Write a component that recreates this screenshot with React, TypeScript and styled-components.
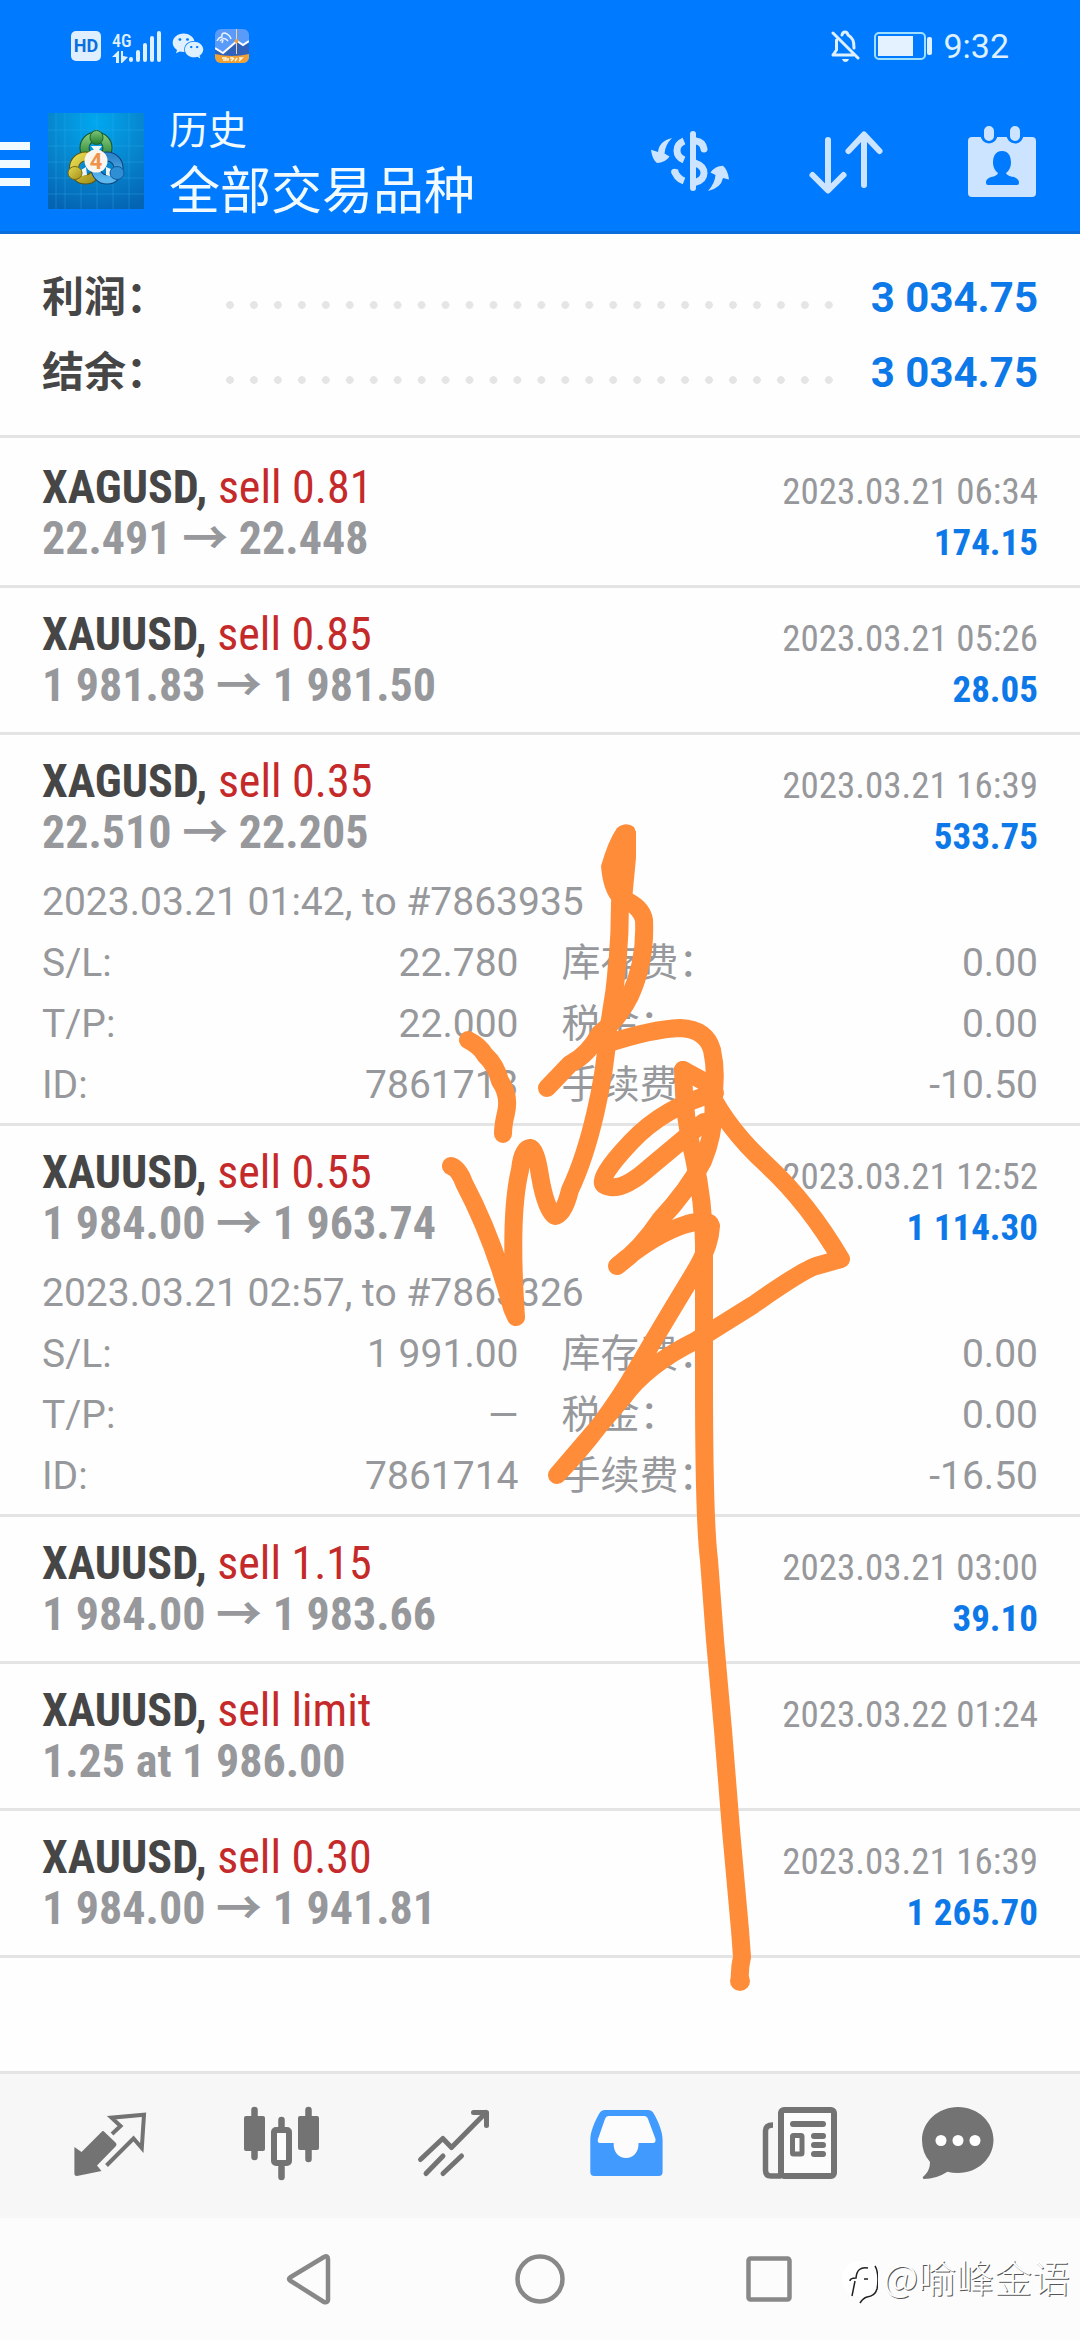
import React from "react";
import styled, { createGlobalStyle } from "styled-components";
import { FaWeixin } from "react-icons/fa";

const SANS = `Roboto, "Noto Sans CJK SC", sans-serif`;
const CONDENSED = `"Roboto Condensed", Roboto, "Noto Sans CJK SC", sans-serif`;

const GlobalStyle = createGlobalStyle`
  * { box-sizing: border-box; }
  body { margin: 0; background: #fefefe; font-family: ${SANS}; }
  button { margin: 0; padding: 0; border: 0; background: none; font: inherit; color: inherit; cursor: pointer; }
  ul, dl, dd, h1, p { margin: 0; padding: 0; }
  ul { list-style: none; }
  svg { display: block; }
`;

const Page = styled.div`
  position: relative;
  display: flex;
  flex-direction: column;
  min-height: 100vh;
  overflow: hidden;
`;

/* ---------- header ---------- */

const Header = styled.header`
  background: #007bff;
  border-bottom: 3px solid #0b6cdb;
  color: #f0faff;
`;

const StatusBar = styled.div`
  display: flex;
  align-items: center;
  justify-content: space-between;
  height: 90px;
  padding: 2px 71px 0 71px;
  color: #dff0ff;
`;

const StatusGroup = styled.div`
  display: flex;
  align-items: center;
  gap: 11px;
`;

const HdBadge = styled.span`
  width: 30px;
  height: 30px;
  border-radius: 5px;
  background: #e0efff;
  color: #0a6fe0;
  font-size: 18px;
  font-weight: 700;
  line-height: 30px;
  text-align: center;
`;

const Signal = styled.div`
  display: grid;
  grid-template-columns: 17px 32px;
  align-items: end;
  height: 33px;
`;

const Network = styled.div`
  font-family: ${CONDENSED};
  font-size: 18px;
  font-weight: 500;
  line-height: 20px;
`;

const Clock = styled.time`
  font-size: 34px;
  line-height: 42px;
`;

const AppBar = styled.div`
  display: flex;
  align-items: center;
  height: 141px;
  padding-right: 30px;
`;

const MenuButton = styled.button`
  display: flex;
  flex-direction: column;
  gap: 10px;
  width: 30px;
  margin-right: 18px;
  padding-top: 6px;
`;

const MenuLine = styled.span`
  height: 8px;
  background: #f0faff;
`;

const Titles = styled.div`
  flex: 1;
  padding: 6px 0 0 25px;
`;

const Screen = styled.p`
  font-size: 39px;
  line-height: 56px;
`;

const Scope = styled.h1`
  font-size: 51px;
  font-weight: 400;
  line-height: 66px;
`;

const Actions = styled.div`
  display: flex;
  gap: 60px;
  color: #cce4ff;
`;

/* ---------- summary ---------- */

const Main = styled.main`
  flex: 1;
`;

const Summary = styled.dl`
  padding: 26px 42px 25px;
  border-bottom: 3px solid #e4e4e4;
`;

const SummaryRow = styled.div`
  display: grid;
  grid-template-columns: 176px 1fr auto;
  align-items: center;
  font-size: 42px;
  font-weight: 700;
  line-height: 75px;
`;

const SummaryLabel = styled.dt`
  color: #464646;
`;

const Leader = styled.span`
  height: 8px;
  margin: 15px 30px 0 0;
  background: radial-gradient(circle closest-side, #e5e5e5 90%, transparent) 0 0 / 24px 8px round;
`;

const SummaryValue = styled.dd`
  color: #0d78e8;
`;

/* ---------- deals ---------- */

const Deals = styled.ul`
  padding-top: 3px;
  color: #97989b;
`;

const DealItem = styled.li<{ $expanded: boolean }>`
  padding: 21px 42px ${(p) => (p.$expanded ? 7 : 17)}px;
  border-bottom: 3px solid #e4e4e4;
`;

const DealHead = styled.div`
  display: flex;
  justify-content: space-between;
  min-height: 106px;
  font-family: ${CONDENSED};
  line-height: 51px;
`;

const DealMain = styled.div`
  font-size: 46px;
  font-weight: 700;
`;

const Symbol = styled.span`
  color: #464646;
`;

const Side = styled.span`
  color: #c52a2a;
  font-weight: 400;
`;

const DealSide = styled.div`
  padding-top: 4px;
  font-size: 37px;
  text-align: right;
`;

const Profit = styled.p`
  color: #0d78e8;
  font-weight: 700;
`;

const Details = styled.div`
  margin-top: 10px;
  font-size: 39px;
  line-height: 61px;
`;

const DetailGrid = styled.dl`
  display: grid;
  grid-template-columns: 1fr 1fr;
  column-gap: 43px;
`;

const DetailPair = styled.div`
  display: flex;
  justify-content: space-between;
`;

/* ---------- bottom bars ---------- */

const TabBar = styled.nav`
  display: grid;
  grid-template-columns: repeat(6, 1fr);
  justify-items: center;
  align-items: center;
  height: 147px;
  padding: 0 24px;
  border-top: 3px solid #e4e4e4;
  background: #f7f7f7;
`;

const Tab = styled.button<{ $active?: boolean }>`
  color: ${(p) => (p.$active ? "#419bff" : "#737373")};
`;

const SystemNav = styled.nav`
  position: relative;
  display: flex;
  align-items: center;
  justify-content: center;
  gap: 170px;
  height: 122px;
  background: #fcfcfc;
  color: #888;
`;

const Watermark = styled.div`
  position: absolute;
  right: 10px;
  top: 36px;
  display: flex;
  align-items: flex-start;
  gap: 5px;
  color: #fff;
  font-family: "Noto Sans CJK SC", sans-serif;
  font-size: 38px;
  font-weight: 300;
  line-height: 44px;
  text-shadow: 1px 1px 0 #555;
`;

const Handwriting = styled.svg`
  position: absolute;
  left: 430px;
  top: 810px;
  pointer-events: none;
`;

/* ---------- data ---------- */

type Deal = {
  symbol: string;
  side: string;
  price: string;
  time: string;
  profit?: string;
  info?: string;
  rows?: [string, string][];
};

const deals: Deal[] = [
  { symbol: "XAGUSD,", side: "sell 0.81", price: "22.491 → 22.448", time: "2023.03.21 06:34", profit: "174.15" },
  { symbol: "XAUUSD,", side: "sell 0.85", price: "1 981.83 → 1 981.50", time: "2023.03.21 05:26", profit: "28.05" },
  {
    symbol: "XAGUSD,", side: "sell 0.35", price: "22.510 → 22.205", time: "2023.03.21 16:39", profit: "533.75",
    info: "2023.03.21 01:42, to #7863935",
    rows: [["S/L:", "22.780"], ["库存费：", "0.00"], ["T/P:", "22.000"], ["税金：", "0.00"], ["ID:", "7861713"], ["手续费：", "-10.50"]],
  },
  {
    symbol: "XAUUSD,", side: "sell 0.55", price: "1 984.00 → 1 963.74", time: "2023.03.21 12:52", profit: "1 114.30",
    info: "2023.03.21 02:57, to #7863326",
    rows: [["S/L:", "1 991.00"], ["库存费：", "0.00"], ["T/P:", "—"], ["税金：", "0.00"], ["ID:", "7861714"], ["手续费：", "-16.50"]],
  },
  { symbol: "XAUUSD,", side: "sell 1.15", price: "1 984.00 → 1 983.66", time: "2023.03.21 03:00", profit: "39.10" },
  { symbol: "XAUUSD,", side: "sell limit", price: "1.25 at 1 986.00", time: "2023.03.22 01:24" },
  { symbol: "XAUUSD,", side: "sell 0.30", price: "1 984.00 → 1 941.81", time: "2023.03.21 16:39", profit: "1 265.70" },
];

/* ---------- icons ---------- */

const Icon = ({ children }: { children: React.ReactNode }) => (
  <svg width="96" height="96" viewBox="0 0 96 96" fill="none" aria-hidden="true">{children}</svg>
);

const line = { stroke: "currentColor", strokeLinecap: "round", strokeLinejoin: "round" } as const;

const CurrencyIcon = () => (
  <Icon>
    <path {...line} strokeWidth="6" d="M51 21V75" />
    <g stroke="currentColor" strokeWidth="7">
      <path d="M42 28Q35 31 35 37.5Q35 44 42 47" />
      <path strokeLinecap="round" d="M54 28Q61 29 62 36" />
      <path d="M53 50Q62 53 62 60Q62 67 53 69.5" />
    </g>
    <path stroke="currentColor" strokeWidth="7" d="M42 68Q34 65 32.5 57" />
    <circle cx="32.5" cy="59" r="3.2" fill="currentColor" />
    <path fill="currentColor" d="M30 25Q17 28 16 39L9 36.7Q10 46 15 50Q23 50 27.5 43.5L22.5 40.5Q23 32 30 25ZM66 78Q79 75 81 65L87 66.5Q86 57 81 52.7Q73 53 68.5 59.5L73.5 62Q73 70 66 78Z" />
  </Icon>
);

const SortIcon = () => (
  <Icon>
    <path {...line} strokeWidth="6" d="M30 27V77M14.5 62L30 77.5L45.5 62M66 72V22M50.5 38L66 21.5L81.5 38" />
  </Icon>
);

const CalendarIcon = () => (
  <Icon>
    <rect x="14" y="24" width="68" height="60" rx="4" fill="currentColor" />
    <path stroke="#007bff" strokeWidth="17" strokeLinecap="round" d="M35 16V22M61 16V22" />
    <path stroke="currentColor" strokeWidth="10" strokeLinecap="round" d="M35 18V23M61 18V23" />
    <path fill="#007bff" d="M48 38C41 38 39 44 39 50C39 54 41 58 44 60Q43 63 37 64Q32 66 32 69V70Q32 72 34 72H63Q65 72 65 70V69Q65 66 60 64Q53 63 52 60C55 58 57 54 57 50C57 44 55 38 48 38Z" />
  </Icon>
);

const QuotesIcon = () => (
  <Icon>
    <path fill="currentColor" d="M39.5 34Q41 32 42.5 34L54 45Q55 46.5 54 48L35 67.5L39.5 73L15 78Q12.4 78 12.4 75.5V49L19.5 54Z" />
    <path stroke="currentColor" strokeWidth="4" strokeLinejoin="miter" d="M50 36L58.5 28L49.5 19.7L82 16.7L79.8 50L71.5 40.5L44.5 67.5" />
  </Icon>
);

const ChartIcon = () => (
  <Icon>
    <path {...line} strokeWidth="6.5" d="M20.5 12V59M74.5 12V61M47.5 22V30M47.5 69V79" />
    <rect x="10" y="18" width="21" height="35" rx="2" fill="currentColor" />
    <rect x="64" y="18" width="21" height="34" rx="2" fill="currentColor" />
    <rect x="40" y="32" width="15" height="33" rx="2" stroke="currentColor" strokeWidth="6" />
    <rect x="43" y="35" width="9" height="27" rx="3" fill="#fcfcfc" />
  </Icon>
);

const TradeIcon = () => (
  <Icon>
    <path {...line} strokeWidth="5" d="M14.5 61.5L36.8 40.5L45.5 49.5L80 14.5M67.5 14.5H80.5V27.5M20 75.5L37 58M37 75.5L55.5 58" />
  </Icon>
);

const HistoryIcon = () => (
  <Icon>
    <path fill="currentColor" d="M27 12H70Q74 12 76 16C81 25 84.6 34 84.6 42V74Q84.6 78 80.6 78H16.3Q12.3 78 12.3 74V42C12.3 34 16 25 21 16Q23 12 27 12Z" />
    <path fill="#fcfcfc" d="M31 18H66Q69 18 70 21L77.5 41Q78 45 75 45H60.5C61 54 55 60 48 60S35 54 35.7 45H22Q19 45 20 41L27 21Q28 18 31 18Z" />
  </Icon>
);

const NewsIcon = () => (
  <Icon>
    <rect x="31" y="12" width="53" height="66" rx="3" fill="#fcfcfc" stroke="currentColor" strokeWidth="6" />
    <path stroke="currentColor" strokeWidth="5.5" d="M23 27Q15.5 27 15.5 33V72Q15.5 78 21 78H31" />
    <path {...line} strokeWidth="6" d="M43 26H73M64 38H73M64 47H73M64 56H73" />
    <rect x="42.5" y="37.5" width="9.5" height="18.5" rx="1" stroke="currentColor" strokeWidth="5" />
  </Icon>
);

const ChatIcon = () => (
  <Icon>
    <path fill="currentColor" d="M36 9C56 9 71.5 24 71.5 42C71.5 60 56 75 36 75Q30 75 25.5 73.7Q14 81 2 81Q-1 80 3 77Q8 72 8 64Q0 55 0 42C0 24 16 9 36 9Z" />
    <g fill="#fff"><circle cx="19" cy="42.5" r="5.5" /><circle cx="36" cy="42.5" r="5.5" /><circle cx="53" cy="42.5" r="5.5" /></g>
  </Icon>
);

const SignalIcon = () => (
  <svg width="32" height="33" viewBox="0 0 32 33" aria-hidden="true">
    <path {...line} strokeWidth="4" d="M2 29V30M9 22V30M16 15V30M23 8V30M30 3V30" />
  </svg>
);

const DataIcon = () => (
  <svg width="16" height="12" viewBox="0 0 16 12" fill="currentColor" aria-hidden="true">
    <path d="M0 6L6 0H7V12H4V6ZM9 0H11V5L16 6L10 12H9Z" />
  </svg>
);

const MutedIcon = () => (
  <svg width="32" height="32" viewBox="0 0 32 32" fill="none" aria-hidden="true">
    <path {...line} strokeWidth="3" d="M2 3L27 28M5.5 10V20L2 25H22M11 5C12 1 16 1 17 5C22 8 23 11 23 18" />
    <path fill="currentColor" d="M11 29H18Q17 32 14.5 32T11 29Z" />
  </svg>
);

const BatteryIcon = () => (
  <svg width="58" height="28" viewBox="0 0 58 28" fill="none" aria-hidden="true">
    <rect x="1" y="1" width="50" height="26" rx="4" stroke="#9fe0ff" strokeWidth="2" />
    <rect x="4" y="4" width="35" height="20" fill="#e4f1ff" />
    <rect x="53" y="5" width="5" height="18" rx="2" fill="#dff0ff" />
  </svg>
);

const FinanceIcon = () => (
  <svg width="34" height="34" viewBox="0 0 34 34" fill="none" aria-hidden="true">
    <defs><clipPath id="finance"><rect width="34" height="34" rx="6" /></clipPath></defs>
    <g clipPath="url(#finance)">
      <path fill="#5a9bfa" d="M0 0H34V34H0Z" />
      <path fill="#2f62bd" d="M0 20L9 23L22 12L28 16L34 12V27H0Z" />
      <path stroke="#fff" strokeWidth="2" d="M0 19L8 24L22 12L28 16L34 12" />
      <path stroke="#f2d3a0" d="M21.5 0V25" />
      <circle cx="21.5" cy="12" r="2" fill="#f0a040" />
      <path stroke="#e8f2ff" strokeWidth="1.5" d="M2 12Q4 8 7 8Q6 4 10 4Q15 6 16 10M5 12Q9 7 13 12M8 11L7 14" />
      <path fill="#f0a136" d="M0 25Q17 29 34 25V34H0Z" />
      <path stroke="#fff3d8" strokeWidth="1.5" d="M7 29H11V31H8M13 29V32M15 29H18M16 32L19 29M20 32L22 29M24 29H27L24 32" />
    </g>
  </svg>
);

const AppLogo = () => (
  <svg width="96" height="96" viewBox="0 0 96 96" fill="none" aria-hidden="true">
    <defs>
      <radialGradient id="sky" cx="50%" cy="10%" r="95%">
        <stop offset="0" stopColor="#00a8f0" /><stop offset=".55" stopColor="#0784cc" /><stop offset="1" stopColor="#0464b4" />
      </radialGradient>
      <linearGradient id="green" x1="0" y1="0" x2="0" y2="1"><stop stopColor="#7fc878" /><stop offset="1" stopColor="#1f7a2c" /></linearGradient>
      <linearGradient id="gold" x1="0" y1="0" x2="1" y2="1"><stop stopColor="#e6d94e" /><stop offset="1" stopColor="#a3901c" /></linearGradient>
      <linearGradient id="azure" x1="0" y1="0" x2="0" y2="1"><stop stopColor="#2f86cc" /><stop offset="1" stopColor="#5cb8ee" /></linearGradient>
    </defs>
    <rect width="96" height="96" fill="url(#sky)" />
    <path stroke="#36b3ee" strokeOpacity=".3" d="M8 0V96M17 0V96M33 0V96M49 0V96M65 0V96M81 0V96M0 17H96M0 33H96M0 49H96M0 65H96M0 81H96" />
    <circle cx="48" cy="35" r="11.5" stroke="#14502c" strokeWidth="10" />
    <circle cx="48" cy="35" r="11.5" stroke="url(#green)" strokeWidth="8" />
    <circle cx="37.5" cy="55" r="11.5" stroke="#565417" strokeWidth="10" />
    <circle cx="37.5" cy="55" r="11.5" stroke="url(#gold)" strokeWidth="8" />
    <circle cx="59" cy="55" r="11.5" stroke="#0b4278" strokeWidth="10" />
    <circle cx="59" cy="55" r="11.5" stroke="url(#azure)" strokeWidth="8" />
    <path fill="#eef6f4" d="M43 33H54L51 37H46ZM33 57L38 54L39 62L33 63ZM63 56L58 54V62L62 63Z" />
    <ellipse cx="48.5" cy="24.500" rx="6.500" ry="7" fill="url(#green)" stroke="#1d6327" />
    <ellipse cx="27" cy="60" rx="7" ry="6.500" fill="url(#gold)" stroke="#77690f" />
    <ellipse cx="69" cy="60" rx="7" ry="6.500" fill="#2e8fd4" stroke="#125b9c" />
    <circle cx="48" cy="48" r="11.5" fill="#fbf5f0" />
    <text x="48" y="56" textAnchor="middle" fontFamily="Roboto, sans-serif" fontSize="22" fontWeight="700" fill="#ef9348">4</text>
  </svg>
);

const WatermarkIcon = () => (
  <svg width="36" height="50" viewBox="0 -6 36 50" fill="none" aria-hidden="true">
    <path fill="#fff" d="M18 1C30 1 36 8 36 18Q35 32 24 37L18 42V37C6 36 0 29 0 19S7 1 18 1Z" />
    <path stroke="#222" strokeWidth="1.5" d="M10 36L13 21M8 21Q8 18 14 18Q15 6 26 8M22 19H26M33 6C37 12 36 25 35 29Q33 36 25 37Q21 38 18 43" />
  </svg>
);

const Signature = () => (
  <Handwriting width="440" height="1200" viewBox="430 810 440 1200" fill="none" aria-hidden="true">
    <g stroke="#ff8c39" strokeWidth="18" strokeLinecap="round" strokeLinejoin="round">
      <path d="M468 1040Q480 1046 485 1055Q496 1065 500 1081Q510 1095 506 1113Q503 1125 503 1134" />
      <path d="M451 1166Q459 1169 464 1183Q493 1238 512 1308L516 1317Q509 1215 520 1170Q522 1149 530 1148Q536 1149 540 1176Q546 1211 555 1216Q564 1215 570 1190C590 1148 605 1080 608 1030Q620 970 620 903L626 850" />
      <path d="M629 902Q642 909 644 920Q646 961 630 996Q618 1020 600 1033Q588 1055 570 1064L547 1088" />
      <path d="M606 1044Q652 1029 680 1028Q706 1029 712 1050Q717 1072 713 1098Q716 1130 703 1161Q688 1190 660 1220Q640 1250 617 1266Q654 1234 687 1224Q709 1218 711 1226Q710 1247 694 1273Q657 1334 635 1372Q603 1427 557 1475L622 1399Q646 1365 697 1340L753 1305Q803 1270 816 1266L841 1259Q808 1203 768 1166Q724 1126 705 1082L683 1070" />
      <path d="M683 1070Q684 1119 694 1158Q704 1203 704 1245V1380Q704 1520 709 1560L715 1640L723 1730L731 1830L740 1930L742 1957Q739 1970 740 1981" />
      <path d="M715 1093Q664 1107 631 1142Q597 1178 604 1185Q620 1194 650 1167L704 1122" />
    </g>
    <path fill="#ff8c39" d="M617 828Q626 821 634 827L636 832V858L632 900L614 903Q603 892 601 866Q608 841 617 828Z" />
    <circle cx="740" cy="1981" r="10" fill="#ff8c39" />
  </Handwriting>
);

/* ---------- parts ---------- */

const SummaryLine = ({ label, value }: { label: string; value: string }) => (
  <SummaryRow>
    <SummaryLabel>{label}</SummaryLabel>
    <Leader />
    <SummaryValue>{value}</SummaryValue>
  </SummaryRow>
);

const DealRow = ({ deal }: { deal: Deal }) => (
  <DealItem $expanded={!!deal.rows}>
    <DealHead>
      <DealMain>
        <p><Symbol>{deal.symbol}</Symbol> <Side>{deal.side}</Side></p>
        <p>{deal.price}</p>
      </DealMain>
      <DealSide>
        <p>{deal.time}</p>
        {deal.profit && <Profit>{deal.profit}</Profit>}
      </DealSide>
    </DealHead>
    {deal.rows && (
      <Details>
        <p>{deal.info}</p>
        <DetailGrid>
          {deal.rows.map(([label, value]) => (
            <DetailPair key={label}>
              <dt>{label}</dt>
              <dd>{value}</dd>
            </DetailPair>
          ))}
        </DetailGrid>
      </Details>
    )}
  </DealItem>
);

export default function App() {
  return (
    <Page>
      <GlobalStyle />
      <Header>
        <StatusBar>
          <StatusGroup>
            <HdBadge>HD</HdBadge>
            <Signal>
              <Network>4G<DataIcon /></Network>
              <SignalIcon />
            </Signal>
            <FaWeixin size={32} />
            <FinanceIcon />
          </StatusGroup>
          <StatusGroup>
            <MutedIcon />
            <BatteryIcon />
            <Clock>9:32</Clock>
          </StatusGroup>
        </StatusBar>
        <AppBar>
          <MenuButton aria-label="菜单">
            <MenuLine /><MenuLine /><MenuLine />
          </MenuButton>
          <AppLogo />
          <Titles>
            <Screen>历史</Screen>
            <Scope>全部交易品种</Scope>
          </Titles>
          <Actions>
            <button aria-label="交易品种"><CurrencyIcon /></button>
            <button aria-label="排序"><SortIcon /></button>
            <button aria-label="日期"><CalendarIcon /></button>
          </Actions>
        </AppBar>
      </Header>

      <Main>
        <Summary>
          <SummaryLine label="利润：" value="3 034.75" />
          <SummaryLine label="结余：" value="3 034.75" />
        </Summary>
        <Deals>
          {deals.map((deal, i) => <DealRow key={i} deal={deal} />)}
        </Deals>
      </Main>

      <TabBar>
        <Tab aria-label="行情"><QuotesIcon /></Tab>
        <Tab aria-label="图表"><ChartIcon /></Tab>
        <Tab aria-label="交易"><TradeIcon /></Tab>
        <Tab aria-label="历史" $active><HistoryIcon /></Tab>
        <Tab aria-label="新闻"><NewsIcon /></Tab>
        <Tab aria-label="消息"><ChatIcon /></Tab>
      </TabBar>

      <SystemNav>
        <button aria-label="返回">
          <svg width="60" height="60" viewBox="0 0 60 60" fill="none">
            <path {...line} strokeWidth="4.5" d="M44 8Q48 6 48 10V51Q48 54 44 53L10 31.5Q8 30 10 28.5Z" />
          </svg>
        </button>
        <button aria-label="主屏幕">
          <svg width="60" height="60" viewBox="0 0 60 60" fill="none">
            <circle cx="30" cy="30" r="22.5" stroke="currentColor" strokeWidth="4.5" />
          </svg>
        </button>
        <button aria-label="最近任务">
          <svg width="60" height="60" viewBox="0 0 60 60" fill="none">
            <rect x="8.5" y="9.5" width="41" height="41" rx="2" stroke="currentColor" strokeWidth="4.5" />
          </svg>
        </button>
        <Watermark>
          <WatermarkIcon />
          <span>@喻峰金语</span>
        </Watermark>
      </SystemNav>
      <Signature />
    </Page>
  );
}
